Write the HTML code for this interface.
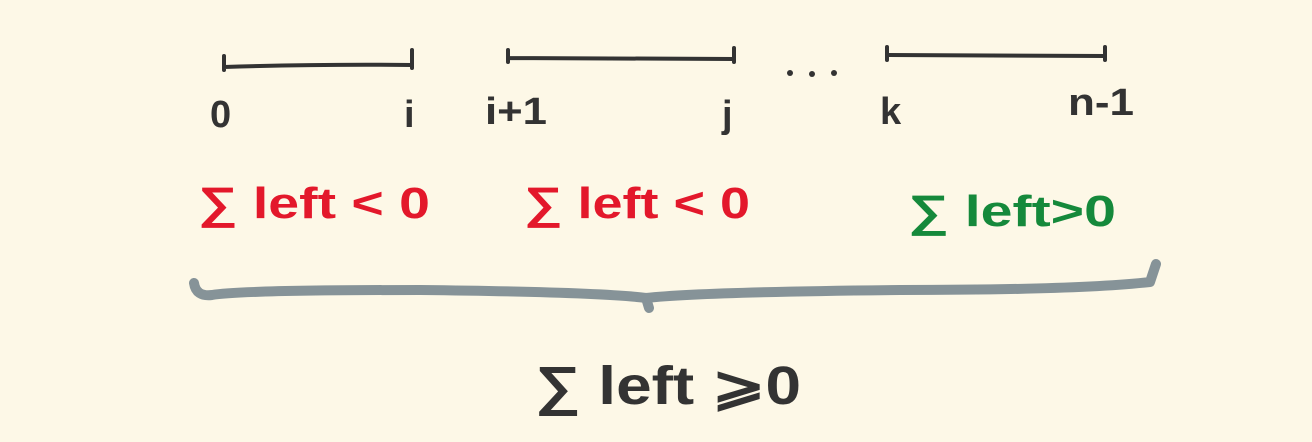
<!DOCTYPE html>
<html><head><style>
html,body{margin:0;padding:0;background:#fdf8e7;}
body{width:1312px;height:442px;overflow:hidden;position:relative;}
svg{position:absolute;left:0;top:0;}
text{font-family:"Liberation Sans",sans-serif;}
</style></head><body>
<svg width="1312" height="442" viewBox="0 0 1312 442">
<g stroke="#333" stroke-width="4" fill="none" stroke-linecap="round">
<path d="M224 56 L224 70 M224 67 Q320 64 412 65 M412 50 L412 68"/>
<path d="M508 50 L508 62 M508 58 L734 59 M734 48 L734 62"/>
<path d="M887 47 L887 60 M887 55 L1105 56 M1105 47 L1105 60"/>
</g>
<g fill="#333"><circle cx="790" cy="73" r="3"/><circle cx="812" cy="74" r="3"/><circle cx="834" cy="73" r="3"/></g>
<g fill="#333" font-size="38" font-weight="bold">
<text x="210" y="127">0</text>
<text x="404" y="127">i</text>
<text x="485" y="124" textLength="62" lengthAdjust="spacingAndGlyphs">i+1</text>
<text x="722" y="127">j</text>
<text x="880" y="124">k</text>
<text x="1068" y="115" textLength="66" lengthAdjust="spacingAndGlyphs">n-1</text>
</g>
<g fill="#e3182b" font-size="44" font-weight="bold">
<text x="198" y="218" textLength="232" lengthAdjust="spacingAndGlyphs">∑ left &lt; 0</text>
<text x="524" y="218" textLength="226" lengthAdjust="spacingAndGlyphs">∑ left &lt; 0</text>
</g>
<text x="908" y="226" fill="#15893b" font-size="44" font-weight="bold" textLength="208" lengthAdjust="spacingAndGlyphs">∑ left&gt;0</text>
<path d="M194 283 Q196 297 212 295 Q240 290 420 290 Q600 292 646 298 L649 308 M646 298 Q700 292 900 290 Q1080 290 1150 282 L1156 264" stroke="#869398" stroke-width="10" fill="none" stroke-linecap="round" stroke-linejoin="round"/>
<text x="535" y="404" fill="#333" font-size="54" font-weight="bold" textLength="266" lengthAdjust="spacingAndGlyphs">∑ left ⩾0</text>
</svg>
</body></html>
